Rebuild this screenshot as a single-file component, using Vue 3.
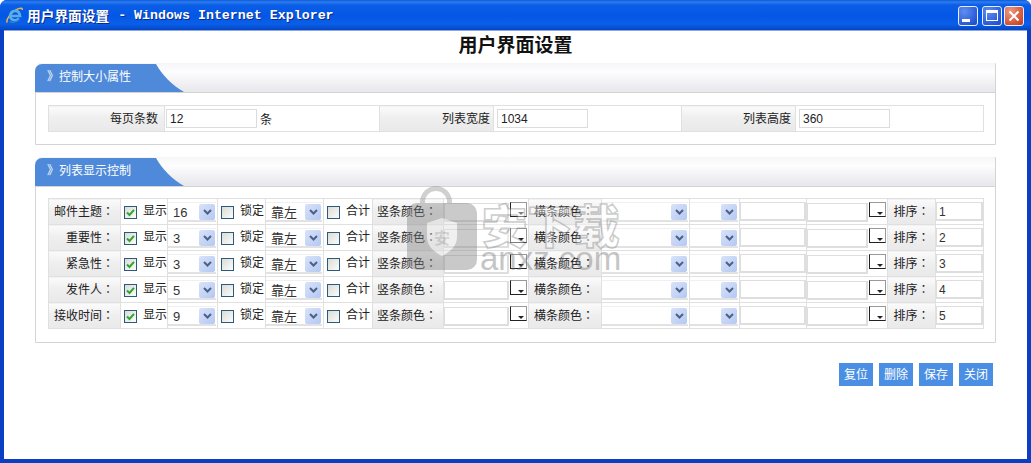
<script setup>
const topFields = [
  { label: '每页条数', value: '12', unit: '条', w: [116, 215] },
  { label: '列表宽度', value: '1034', unit: '', w: [114, 188] },
  { label: '列表高度', value: '360', unit: '', w: [114, 188] }
]
const rows = [
  { name: '邮件主题', size: '16', order: '1' },
  { name: '重要性', size: '3', order: '2' },
  { name: '紧急性', size: '3', order: '3' },
  { name: '发件人', size: '5', order: '4' },
  { name: '接收时间', size: '9', order: '5' }
]
const colWidths = [72, 47, 50, 48, 58, 49, 71, 85, 73, 88, 50, 67, 81, 48, 48]
const buttons = ['复位', '删除', '保存', '关闭']
</script>

<template>
  <div class="window">
    <header class="titlebar">
      <svg class="ie" width="17" height="17" viewBox="0 0 17 17">
        <path d="M1.200 15.600C-.2 12.800 5 4.500 12.500 1.600c2.400-.9 4-.5 3.800 1.400" fill="none" stroke="#e8b93c" stroke-width="1.500"/>
        <path d="M12.800 11.200a4.700 4.700 0 0 1-8.600-2.700 4.900 4.900 0 0 1 9.500-1.300l.3 1.800H5" fill="none" stroke="#58aeea" stroke-width="2.600"/>
        <path d="M3.500 14.500c3 1.300 7 1 9.800-2" fill="none" stroke="#2f7cc8" stroke-width="1.400"/>
      </svg>
      <span class="cap-cn">用户界面设置</span>
      <span class="cap-en">- Windows Internet Explorer</span>
      <div class="controls">
        <button class="wbtn"><i class="min"></i></button>
        <button class="wbtn mx"><i class="max"></i></button>
        <button class="wbtn close">
          <svg width="12" height="12" viewBox="0 0 12 12"><path d="M1.500 1.500l9 9M10.500 1.500l-9 9" stroke="#fff" stroke-width="2"/></svg>
        </button>
      </div>
    </header>

    <main class="content">
      <h1 class="page-title">用户界面设置</h1>

      <section class="panel first">
        <div class="panel-head">
          <div class="tab">
            <svg class="tab-bg" width="149" height="28" viewBox="0 0 149 28">
              <path d="M0 28V7a7 7 0 0 1 7-7H121C127 11 137 21 149 28Z" fill="#4f8ada"/>
            </svg>
            <span class="tab-text">》控制大小属性</span>
          </div>
        </div>
        <div class="panel-body">
          <table class="top-table">
            <colgroup>
              <template v-for="f in topFields" :key="f.label">
                <col :style="{ width: f.w[0] + 'px' }" />
                <col :style="{ width: f.w[1] + 'px' }" />
              </template>
            </colgroup>
            <tbody>
              <tr>
                <template v-for="f in topFields" :key="f.label">
                  <td class="lab right">{{ f.label }}</td>
                  <td class="val">
                    <input class="top-input" :value="f.value" />
                    <span v-if="f.unit" class="unit">{{ f.unit }}</span>
                  </td>
                </template>
              </tr>
            </tbody>
          </table>
        </div>
      </section>

      <section class="panel second">
        <div class="panel-head">
          <div class="tab">
            <svg class="tab-bg" width="149" height="28" viewBox="0 0 149 28">
              <path d="M0 28V7a7 7 0 0 1 7-7H121C127 11 137 21 149 28Z" fill="#4f8ada"/>
            </svg>
            <span class="tab-text">》列表显示控制</span>
          </div>
        </div>
        <div class="panel-body grid-body">
          <table class="grid">
            <colgroup>
              <col v-for="(w, i) in colWidths" :key="i" :style="{ width: w + 'px' }" />
            </colgroup>
            <tbody>
              <tr v-for="r in rows" :key="r.name">
                <td class="lab right name">{{ r.name }}<span class="colon">：</span></td>
                <td><div class="chk-cell"><span class="cb on"><svg width="9" height="9" viewBox="0 0 9 9"><path d="M1 4.500l2.500 2.500L8 1.800" fill="none" stroke="#2fa52f" stroke-width="2"/></svg></span>显示</div></td>
                <td><div class="sel">{{ r.size }}<span class="arrow"><svg width="9" height="6" viewBox="0 0 9 6"><path d="M1 1l3.500 3.500L8 1" fill="none" stroke="#4d6185" stroke-width="2"/></svg></span></div></td>
                <td><div class="chk-cell"><span class="cb"></span>锁定</div></td>
                <td><div class="sel cn">靠左<span class="arrow"><svg width="9" height="6" viewBox="0 0 9 6"><path d="M1 1l3.500 3.500L8 1" fill="none" stroke="#4d6185" stroke-width="2"/></svg></span></div></td>
                <td><div class="chk-cell"><span class="cb"></span>合计</div></td>
                <td class="lab left">竖条颜色<span class="colon">：</span></td>
                <td><div class="color"><input class="cinput w65" /><span class="picker"></span></div></td>
                <td class="lab left wide">横条颜色<span class="colon">：</span></td>
                <td><div class="sel"><span class="arrow"><svg width="9" height="6" viewBox="0 0 9 6"><path d="M1 1l3.500 3.500L8 1" fill="none" stroke="#4d6185" stroke-width="2"/></svg></span></div></td>
                <td><div class="sel"><span class="arrow"><svg width="9" height="6" viewBox="0 0 9 6"><path d="M1 1l3.500 3.500L8 1" fill="none" stroke="#4d6185" stroke-width="2"/></svg></span></div></td>
                <td><input class="cinput full" /></td>
                <td><div class="color"><input class="cinput w61" /><span class="picker"></span></div></td>
                <td class="lab center">排序<span class="colon">：</span></td>
                <td><input class="cinput full order" :value="r.order" /></td>
              </tr>
            </tbody>
          </table>
        </div>
      </section>

      <div class="actions">
        <button v-for="b in buttons" :key="b" class="act">{{ b }}</button>
      </div>

      <div class="watermark" aria-hidden="true">
        <div class="wm-lock">
          <span class="wm-shackle"></span>
          <span class="wm-square">
            <svg width="34" height="40" viewBox="0 0 34 40"><path d="M17 1l15 5v14c0 9-7 15-15 19C9 35 2 29 2 20V6Z" fill="#dcdcdc"/></svg>
            <b class="wm-shield-text">安</b>
          </span>
        </div>
        <div class="wm-text">
          <span class="wm-cn">安下载</span>
          <span class="wm-en">anxz.com</span>
        </div>
      </div>
    </main>
  </div>
</template>

<style>
html, body { margin: 0; background: #fff; overflow: hidden; }
</style>

<style scoped>
.window {
  width: 1031px;
  height: 463px;
  box-sizing: border-box;
  display: flex;
  flex-direction: column;
  background: #0a3fc4;
  border-radius: 7px 7px 0 0;
  overflow: hidden;
  font-family: "Liberation Sans", "Noto Sans CJK SC", sans-serif;
  font-size: 12px;
  color: #222;
}
.titlebar {
  height: 30px;
  flex: none;
  display: flex;
  align-items: center;
  padding: 0 7px 0 6px;
  box-sizing: border-box;
  background: linear-gradient(#0a5ad8 0, #2f7cf0 2px, #0a5ee6 5px, #0457e4 16px, #0a5fe8 24px, #0345c4 30px);
  color: #fff;
  font-weight: 700;
  text-shadow: 1px 1px 0 #0a2a8c;
}
.ie { flex: none; margin-right: 4px; }
.cap-cn {
  font-family: "Noto Sans CJK SC", sans-serif;
  font-size: 13.700px;
  line-height: 30px;
}
.cap-en {
  font-family: "Liberation Mono", monospace;
  font-size: 13.300px;
  margin-left: 9px;
}
.controls { margin-left: auto; display: flex; gap: 2px; margin-top: 1px; }
.wbtn {
  width: 20px;
  height: 20px;
  box-sizing: border-box;
  padding: 0;
  border: 1px solid #e8eefc;
  border-radius: 3px;
  background: radial-gradient(circle at 30% 25%, #5f8ef0, #2a5bd8 70%, #1e48c0);
  display: flex;
  align-items: center;
  justify-content: center;
}
.wbtn.mx { margin-left: 2px; }
.wbtn .min { width: 8px; height: 3px; background: #fff; margin: 9px 5px 0 0; }
.wbtn .max { width: 12px; height: 11px; box-sizing: border-box; border: 1px solid #fff; border-top-width: 3px; }
.wbtn.close { background: radial-gradient(circle at 30% 25%, #ec9a80, #d5573a 65%, #b83a22); }

.content {
  flex: 1;
  margin: 0 4px 4px;
  background: #fff;
  border-top: 1px solid #8ea6de;
  padding: 0 31px;
  position: relative;
  min-height: 0;
}
.page-title {
  margin: 0;
  height: 32px;
  line-height: 25px;
  text-align: center;
  font-family: "Noto Sans CJK SC", sans-serif;
  font-size: 19px;
  font-weight: 700;
  color: #111;
}
.panel {
  border: 1px solid #d4d4d4;
  border-radius: 7px 0 0 0;
  box-sizing: border-box;
}
.panel.first { height: 82px; margin-bottom: 12px; }
.panel.second { height: 186px; }
.panel-head {
  height: 28px;
  border-bottom: 1px solid #d4d4d4;
  background: linear-gradient(#f6f6f8, #fdfdfe 30%, #e7e7ec);
  margin: -1px 0 0 -1px;
  padding-top: 1px;
  border-radius: 7px 0 0 0;
}
.tab { position: relative; width: 149px; height: 28px; }
.tab-bg { position: absolute; left: 0; top: 0; }
.tab-text {
  position: relative;
  display: block;
  line-height: 27px;
  padding-left: 12px;
  color: #fff;
  font-size: 12px;
  white-space: nowrap;
}
.panel-body { padding: 12px 12px 0 12px; }
.grid-body { padding-top: 11px; }
table { border-collapse: collapse; table-layout: fixed; }
td { padding: 0; border: 1px solid #e0e0e0; }
.top-table { width: 935px; height: 27px; }
.top-table td:nth-child(1) { padding-right: 6px; }
.top-table td:nth-child(3) { padding-right: 3px; }
.top-table td:nth-child(5) { padding-right: 4px; }
.top-table td:nth-child(2) { padding-left: 1px; }
.top-table td:nth-child(4), .top-table td:nth-child(6) { padding-left: 3px; }
.grid { width: 935px; }
.grid tr { height: 26px; }
.lab {
  background: linear-gradient(#fbfbfb 0, #efefef 45%, #e9e9ea 100%);
  white-space: nowrap;
  color: #222;
  padding-bottom: 2px;
  box-sizing: border-box;
}
.colon { font-family: "Noto Sans CJK TC", sans-serif; }
.lab.right { text-align: right; padding-right: 6px; }
.lab.left { text-align: left; padding-left: 4px; }
.lab.left.wide { padding-left: 5px; }
.lab.center { text-align: center; }
.val { white-space: nowrap; }
.top-input {
  width: 91px;
  height: 19px;
  box-sizing: border-box;
  border: 1px solid #dcdcdc;
  padding: 0 3px;
  font: inherit;
  color: #222;
  outline: none;
  vertical-align: middle;
}
.unit { margin-left: 3px; vertical-align: middle; }
.chk-cell {
  display: flex;
  align-items: center;
  padding: 0 0 1px 3px;
  box-sizing: border-box;
  white-space: nowrap;
  overflow: hidden;
  height: 24px;
  line-height: 20px;
}
.cb {
  width: 13px;
  height: 13px;
  flex: none;
  box-sizing: border-box;
  border: 1px solid #2a5a7e;
  background: linear-gradient(135deg, #dcdcd6, #fbfbf8);
  margin: 2px 6px 0 0;
  display: flex;
  align-items: center;
  justify-content: center;
}
.sel {
  height: 20px;
  margin: 2px 1px 2px 0;
  border-bottom: 2px solid #e2e2e2;
  border-top: 1px solid #f0f0f0;
  box-sizing: border-box;
  display: flex;
  align-items: center;
  padding: 2px 0 0 5px;
  background: #fff;
  font-size: 13px;
  color: #333;
  position: relative;
}
.sel.cn { padding-top: 1px; }
.arrow {
  position: absolute;
  right: 1px;
  top: 1px;
  width: 16px;
  height: 16px;
  background: linear-gradient(135deg, #d8e3fa, #b4c8f2);
  border-radius: 2px;
  display: flex;
  align-items: center;
  justify-content: center;
}
.color { display: flex; align-items: flex-start; height: 24px; }
.cinput {
  height: 19px;
  box-sizing: border-box;
  border: 1px solid #dedede;
  border-width: 1px 2px 2px 1px;
  padding: 0 2px;
  font: inherit;
  outline: none;
  display: block;
}
.w65 { width: 65px; margin-top: 3px; }
.w61 { width: 61px; margin-top: 3px; }
.full { width: 100%; }
.order { font-size: 12px; color: #333; padding-top: 2px; }
.picker {
  width: 17px;
  height: 15px;
  box-sizing: border-box;
  margin: 2px 0 0 1px;
  border: 1px solid #999;
  border-left-color: #222;
  border-bottom-color: #222;
  background: #fff;
  position: relative;
  flex: none;
}
.picker::after {
  content: "";
  position: absolute;
  right: 2px;
  bottom: 1px;
  border: 3px solid transparent;
  border-top-color: #222;
  border-bottom-width: 0;
}

.actions {
  display: flex;
  justify-content: flex-end;
  gap: 6px;
  margin-top: 20px;
  padding-right: 3px;
}
.act {
  width: 34px;
  height: 23px;
  padding: 0 0 3px;
  border: 0;
  background: #4a8fe3;
  color: #fff;
  font: inherit;
  font-size: 12px;
}

.watermark {
  position: absolute;
  left: 403px;
  top: 155px;
  display: flex;
  opacity: .42;
  pointer-events: none;
}
.wm-lock { width: 70px; height: 84px; position: relative; }
.wm-shackle {
  position: absolute;
  left: 13px;
  top: 0;
  width: 32px;
  height: 34px;
  border: 5px solid #909090;
  border-radius: 20px 20px 0 0;
  border-bottom: 0;
  box-sizing: border-box;
}
.wm-square {
  position: absolute;
  left: 0;
  top: 17px;
  width: 70px;
  height: 67px;
  background: #808080;
  border-radius: 10px;
  display: flex;
  align-items: center;
  justify-content: center;
}
.wm-shield-text {
  position: absolute;
  color: #999;
  font-size: 16px;
  font-family: "Noto Sans CJK SC", sans-serif;
}
.wm-text {
  margin-left: 3px;
  display: flex;
  flex-direction: column;
  align-items: center;
  margin-top: 15px;
}
.wm-cn {
  font-family: "Noto Sans CJK SC", sans-serif;
  font-size: 46px;
  font-weight: 900;
  line-height: 44px;
  color: #fff;
  -webkit-text-stroke: 1.500px #888;
  white-space: nowrap;
}
.wm-en {
  font-family: "Liberation Sans", sans-serif;
  font-size: 33px;
  line-height: 28px;
  color: #777;
}
</style>
